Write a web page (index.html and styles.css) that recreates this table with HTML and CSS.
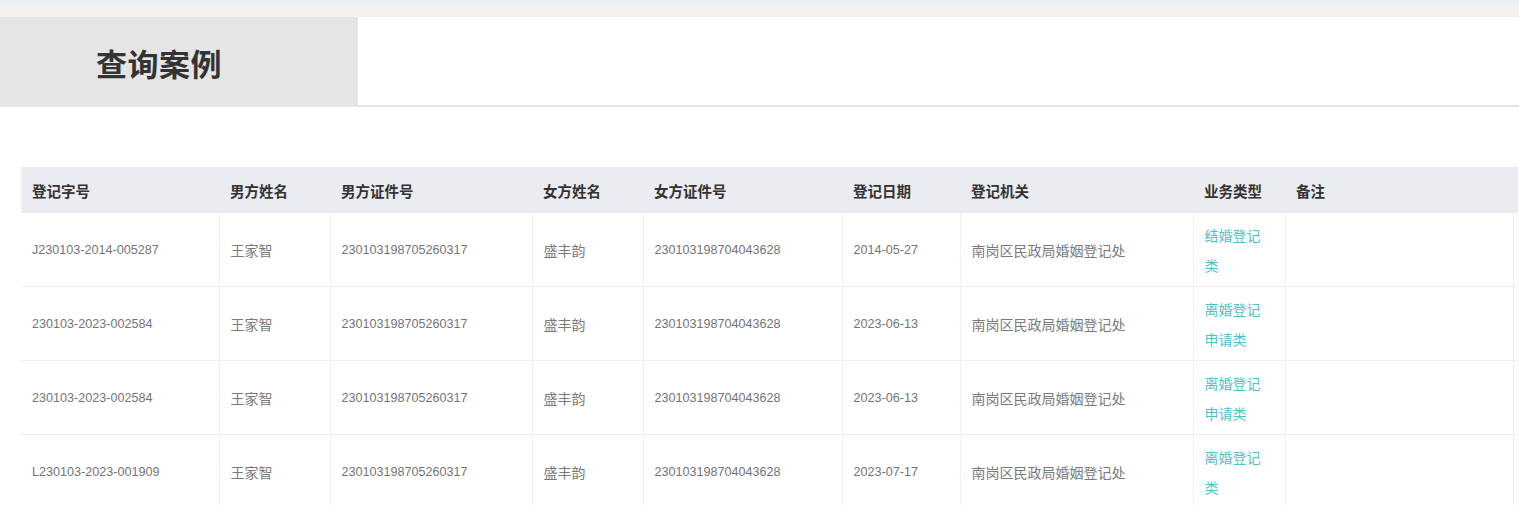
FILE: index.html
```html
<!DOCTYPE html>
<html lang="zh-CN">
<head>
<meta charset="utf-8">
<title>查询案例</title>
<link rel="stylesheet" href="styles.css">
</head>
<body>
<div class="topbar"></div>
<div class="subbar"></div>
<div class="tabs">
  <div class="tab active">查询案例</div>
</div>
<div class="content">
  <table class="grid">
    <colgroup>
      <col style="width:198px"><col style="width:111px"><col style="width:202px"><col style="width:111px"><col style="width:199px"><col style="width:118px"><col style="width:233px"><col style="width:92px"><col style="width:228px"><col style="width:5px">
    </colgroup>
    <thead>
      <tr><th>登记字号</th><th>男方姓名</th><th>男方证件号</th><th>女方姓名</th><th>女方证件号</th><th>登记日期</th><th>登记机关</th><th>业务类型</th><th>备注</th><th class="pad"></th></tr>
    </thead>
    <tbody>
      <tr><td class="num">J230103-2014-005287</td><td>王家智</td><td class="num">230103198705260317</td><td>盛丰韵</td><td class="num">230103198704043628</td><td class="num">2014-05-27</td><td>南岗区民政局婚姻登记处</td><td class="type">结婚登记类</td><td></td><td class="pad"></td></tr>
      <tr><td class="num">230103-2023-002584</td><td>王家智</td><td class="num">230103198705260317</td><td>盛丰韵</td><td class="num">230103198704043628</td><td class="num">2023-06-13</td><td>南岗区民政局婚姻登记处</td><td class="type">离婚登记申请类</td><td></td><td class="pad"></td></tr>
      <tr><td class="num">230103-2023-002584</td><td>王家智</td><td class="num">230103198705260317</td><td>盛丰韵</td><td class="num">230103198704043628</td><td class="num">2023-06-13</td><td>南岗区民政局婚姻登记处</td><td class="type">离婚登记申请类</td><td></td><td class="pad"></td></tr>
      <tr><td class="num">L230103-2023-001909</td><td>王家智</td><td class="num">230103198705260317</td><td>盛丰韵</td><td class="num">230103198704043628</td><td class="num">2023-07-17</td><td>南岗区民政局婚姻登记处</td><td class="type">离婚登记类</td><td></td><td class="pad"></td></tr>
    </tbody>
  </table>
</div>
</body>
</html>
```
FILE: styles.css
```css
html, body {
  margin: 0;
  padding: 0;
  background: #ffffff;
  font-family: "Noto Sans CJK SC", "Liberation Sans", sans-serif;
  overflow: hidden;
}
.topbar {
  height: 5px;
  background: #edf1f4;
}
.subbar {
  height: 12px;
  background: #f2f2f2;
}
.tabs {
  display: flex;
  height: 88px;
  border-bottom: 2px solid #e3e3e3;
}
.tab {
  width: 358px;
  box-sizing: border-box;
  padding-left: 96px;
  display: flex;
  align-items: center;
  font-size: 31px;
  font-weight: 700;
  color: #333333;
  letter-spacing: 0.5px;
}
.tab.active {
  background: #e5e5e5;
  margin-bottom: -2px;
}
.content {
  padding: 60px 0 0 21px;
}
.grid {
  border-collapse: collapse;
  table-layout: fixed;
  width: 1497px;
}
.grid th {
  height: 46px;
  padding: 0 11px;
  background: #ebecf1;
  text-align: left;
  font-size: 14.5px;
  font-weight: 700;
  color: #333333;
  white-space: nowrap;
}
.grid td {
  height: 60px;
  padding: 7px 11px 6px 11px;
  border-right: 1px solid #f1f1f1;
  border-bottom: 1px solid #eeeeee;
  font-size: 14px;
  line-height: 30px;
  color: #7a7a7a;
  vertical-align: middle;
}
.grid td.num {
  font-family: "Liberation Sans", sans-serif;
  font-size: 12.6px;
  color: #747474;
  white-space: nowrap;
}
.grid td.type {
  color: #4cc3c9;
  word-break: break-all;
}
.grid td.pad,
.grid th.pad {
  padding: 0;
  border-right: none;
}
```
